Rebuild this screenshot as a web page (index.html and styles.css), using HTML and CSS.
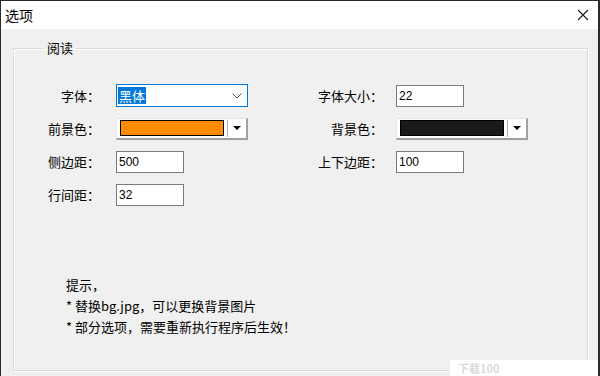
FILE: index.html
```html
<html>
    <head>
        <title>选项</title>
        <link rel="stylesheet" href="styles.css">
    </head>
    <body>
        <div class="window">
            <div class="titlebar">
                <span class="title">选项</span>
                <svg class="close" width="12" height="12" viewBox="0 0 12 12">
                    <path d="M1 1 L11 11 M11 1 L1 11" stroke="#1a1a1a" stroke-width="1.1" fill="none"/>
                </svg>
            </div>

            <div class="client">
                <fieldset class="group">
                    <legend>阅读</legend>

                    <div class="form">
                        <div class="label">字体：</div>
                        <div class="select">
                            <span class="selected">黑体</span>
                            <svg class="chevron" width="10" height="6" viewBox="0 0 10 6">
                                <path d="M0.5 0.5 L5 5 L9.5 0.5" stroke="#555" stroke-width="1" fill="none"/>
                            </svg>
                        </div>
                        <div class="label right">字体大小：</div>
                        <div class="input">22</div>

                        <div class="label">前景色：</div>
                        <div class="combo">
                            <div class="swatch orange"></div>
                            <div class="drop"><span class="arrow"></span></div>
                        </div>
                        <div class="label right">背景色：</div>
                        <div class="combo">
                            <div class="swatch dark"></div>
                            <div class="drop"><span class="arrow"></span></div>
                        </div>

                        <div class="label">侧边距：</div>
                        <div class="input">500</div>
                        <div class="label right">上下边距：</div>
                        <div class="input">100</div>

                        <div class="label">行间距：</div>
                        <div class="input">32</div>
                    </div>

                    <div class="tips">
                        <div>提示，</div>
                        <div>* 替换bg.jpg，可以更换背景图片</div>
                        <div>* 部分选项，需要重新执行程序后生效！</div>
                    </div>
                </fieldset>
            </div>
        </div>

        <div class="watermark">下载100</div>
    </body>
</html>
```

FILE: styles.css
```css
body {
    margin: 0;
    background-color: #2a2a2a;
    font-family: "Noto Sans CJK SC", "Liberation Sans", sans-serif;
    font-size: 13px;
    color: #000;
    overflow: hidden;
}

.window {
    margin: 1px 2px 0 1px;
    height: 375px;
    background-color: #f0f0f0;
    display: flex;
    flex-direction: column;
}

.titlebar {
    flex-shrink: 0;
    height: 28px;
    background-color: #fff;
    display: flex;
    align-items: center;
    justify-content: space-between;
    padding: 0 9px 0 4px;
}

.title {
    font-size: 14px;
}

.client {
    flex: 1;
    padding: 11px 10px 0 12px;
}

.group {
    box-sizing: border-box;
    margin: 0;
    height: 331px;
    border: 1px solid #dcdcdc;
    box-shadow: inset 1px 1px 0 #fff, 1px 1px 0 #fff;
    padding: 28px 0 0 26px;
}

.group legend {
    margin-left: 4px;
    padding: 0 3px;
    font-size: 13px;
    line-height: 16px;
}

.form {
    display: grid;
    grid-template-columns: 76px 132px 148px 132px;
    grid-auto-rows: 23px;
    row-gap: 10px;
    align-items: center;
}

.label {
    text-align: right;
    padding-right: 16px;
    white-space: nowrap;
}

.label.right {
    padding-right: 13px;
}

.select {
    height: 21px;
    border: 1px solid #0078d7;
    background-color: #fff;
    display: flex;
    align-items: center;
    justify-content: space-between;
    padding: 0 5px 0 1px;
}

.selected {
    background-color: #0078d7;
    color: #fff;
    line-height: 17px;
    padding: 0 1px;
}

.input {
    width: 64px;
    height: 20px;
    border: 1px solid #7a7a7a;
    background-color: #fff;
    font-family: "Liberation Sans", sans-serif;
    font-size: 12px;
    line-height: 20px;
    padding-left: 2px;
}

.combo {
    height: 19px;
    background-color: #fff;
    border-top: 1px solid #e3e3e3;
    border-left: 1px solid #e3e3e3;
    border-right: 2px solid #a0a0a0;
    border-bottom: 2px solid #a0a0a0;
    display: flex;
    align-items: center;
    padding: 0 0 0 3px;
}

.swatch {
    flex: 1;
    height: 14px;
    border: 1px solid #000;
}

.orange {
    background-color: #ff8c00;
}

.dark {
    background-color: #1a1a1a;
}

.drop {
    width: 18px;
    height: 17px;
    margin-left: 3px;
    border-left: 1px solid #b0b0b0;
    box-shadow: inset 1px 0 0 #fff;
    display: flex;
    align-items: center;
    justify-content: center;
}

.arrow {
    width: 0;
    height: 0;
    border-left: 4px solid transparent;
    border-right: 4px solid transparent;
    border-top: 4px solid #000;
}

.tips {
    margin-top: 68px;
    padding-left: 26px;
    line-height: 21px;
}

.watermark {
    position: absolute;
    left: 450px;
    top: 360px;
    width: 140px;
    height: 16px;
    background-color: #fff;
    color: #dadada;
    font-size: 11px;
    font-weight: bold;
    line-height: 16px;
    padding-left: 8px;
}
```
